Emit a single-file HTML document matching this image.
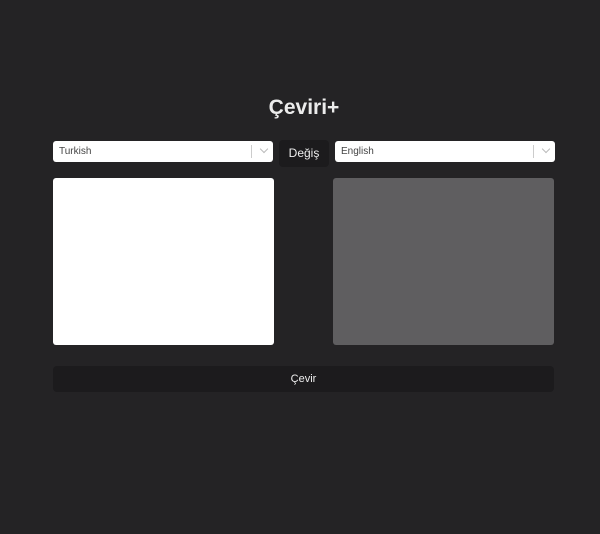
<!DOCTYPE html>
<html><head><style>
body{margin:0;width:600px;height:534px;background:#242325;font-family:"Liberation Sans",sans-serif;position:relative;overflow:hidden}
.a{position:absolute}
h1{position:absolute;left:0;width:608px;top:96px;margin:0;text-align:center;font-size:21px;color:#ececec;font-weight:bold}
.sel{background:#fff;border-radius:3px;height:21px;font-size:10px;color:#444;box-sizing:border-box;padding:5px 6px}
.sel .sep{position:absolute;right:21px;top:4px;width:1px;height:13px;background:#ccc}
.sel .ch{position:absolute;right:6px;top:7px;width:5px;height:5px;border-right:1px solid #bbb;border-bottom:1px solid #bbb;transform:rotate(45deg);transform-origin:center;top:5px}
</style></head><body>
<h1>Çeviri+</h1>
<div class="a sel" style="left:53px;top:141px;width:220px">Turkish<div class="sep"></div><div class="ch"></div></div>
<div class="a" style="left:279px;top:140px;width:50px;height:27px;background:#1c1b1d;border-radius:4px;color:#eee;font-size:12px;text-align:center;line-height:27px">Değiş</div>
<div class="a sel" style="left:335px;top:141px;width:220px">English<div class="sep"></div><div class="ch"></div></div>
<div class="a" style="left:53px;top:178px;width:221px;height:167px;background:#fff;border-radius:3px"></div>
<div class="a" style="left:333px;top:178px;width:221px;height:167px;background:#5f5e60;border-radius:3px"></div>
<div class="a" style="left:53px;top:366px;width:501px;height:26px;background:#1c1b1d;border-radius:4px;color:#eee;font-size:11px;text-align:center;line-height:26px">Çevir</div>
</body></html>
